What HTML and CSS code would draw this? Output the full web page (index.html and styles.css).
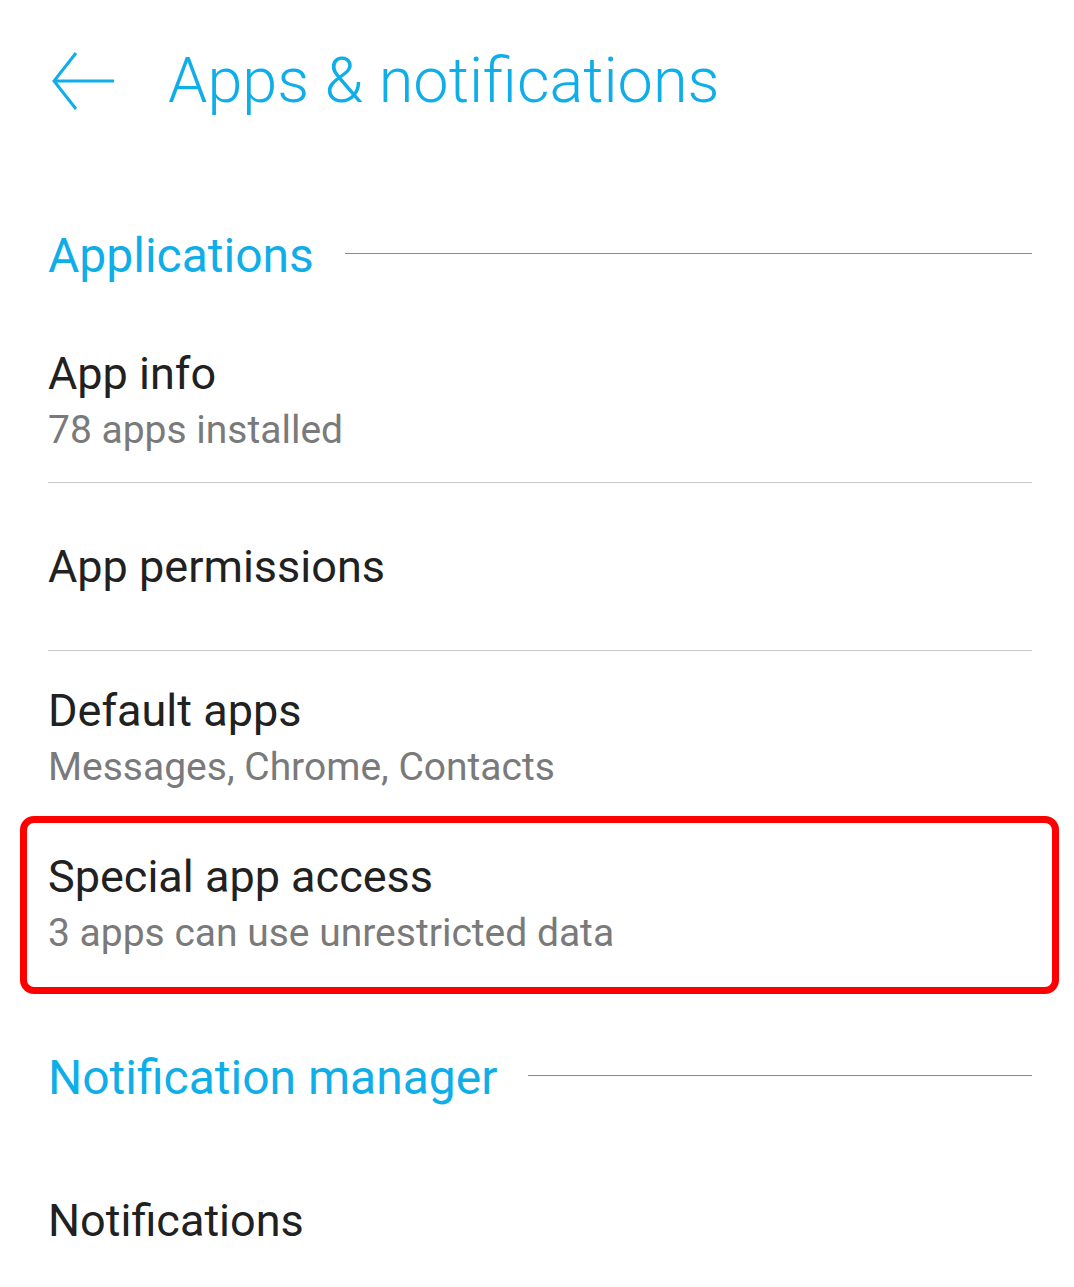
FILE: index.html
```html
<!DOCTYPE html>
<html>
<head>
<meta charset="utf-8">
<link rel="stylesheet" href="styles.css">
</head>
<body>
<div class="page">
  <header class="topbar">
    <svg class="back" width="64" height="60" viewBox="0 0 64 60">
      <path d="M24 2 L2 30 L24 58 M2 30 L62 30" fill="none" stroke="#10aee8" stroke-width="3" stroke-linecap="butt" stroke-linejoin="miter"/>
    </svg>
    <h1 class="title">Apps &amp; notifications</h1>
  </header>

  <div class="section">
    <span class="section-label">Applications</span>
    <span class="section-line"></span>
  </div>

  <div class="row row-first">
    <div class="row-title">App info</div>
    <div class="row-sub">78 apps installed</div>
  </div>
  <div class="row row-single divided">
    <div class="row-title">App permissions</div>
  </div>
  <div class="row row-default">
    <div class="row-title">Default apps</div>
    <div class="row-sub">Messages, Chrome, Contacts</div>
  </div>
  <div class="row row-special">
    <div class="row-title">Special app access</div>
    <div class="row-sub">3 apps can use unrestricted data</div>
    <div class="highlight"></div>
  </div>

  <div class="section section-2">
    <span class="section-label">Notification manager</span>
    <span class="section-line"></span>
  </div>

  <div class="row row-single row-last">
    <div class="row-title">Notifications</div>
  </div>
</div>
</body>
</html>
```

FILE: styles.css
```css
* { box-sizing: border-box; }
html, body {
  margin: 0;
  padding: 0;
  background: #ffffff;
}
body {
  font-family: Roboto, "Noto Sans", "Liberation Sans", sans-serif;
  width: 1074px;
  height: 1287px;
  overflow: hidden;
}
.page {
  padding: 0 42px 0 48px;
}
.topbar {
  height: 170px;
  display: flex;
  align-items: center;
  padding-bottom: 10px;
}
.back {
  margin-left: 4px;
  margin-top: 2px;
  flex: none;
}
.title {
  margin: 0 0 0 52px;
  font-weight: 300;
  font-size: 63px;
  color: #10aee8;
  line-height: 1;
  white-space: nowrap;
}
.section {
  height: 161px;
  display: flex;
  align-items: center;
  gap: 31px;
  padding-top: 9px;
}
.section-label {
  font-size: 48px;
  color: #10aee8;
  font-weight: 400;
  white-space: nowrap;
}
.section-line {
  flex: 1;
  height: 1px;
  background: #8a8a8a;
  margin-top: -4px;
}
.row {
  height: 168px;
  display: flex;
  flex-direction: column;
  justify-content: center;
  position: relative;
}
.row-first {
  border-bottom: 1px solid #c8c8c8;
  height: 152px;
  padding-bottom: 10px;
}
.divided {
  border-bottom: 1px solid #c8c8c8;
}
.row-default {
  padding-top: 8px;
}
.row-title {
  font-size: 45px;
  color: #212121;
  line-height: 56px;
  white-space: nowrap;
}
.row-sub {
  font-size: 39px;
  color: #7a7a7a;
  line-height: 56px;
  white-space: nowrap;
}
.row-special {
  height: 172px;
}
.highlight {
  position: absolute;
  left: -28px;
  right: -27px;
  top: -3px;
  bottom: -3px;
  border: 7px solid #ff0000;
  border-radius: 14px;
  pointer-events: none;
}
.section-2 {
  height: 170px;
  padding-top: 3px;
}
.row-last {
  height: 120px;
}
```
